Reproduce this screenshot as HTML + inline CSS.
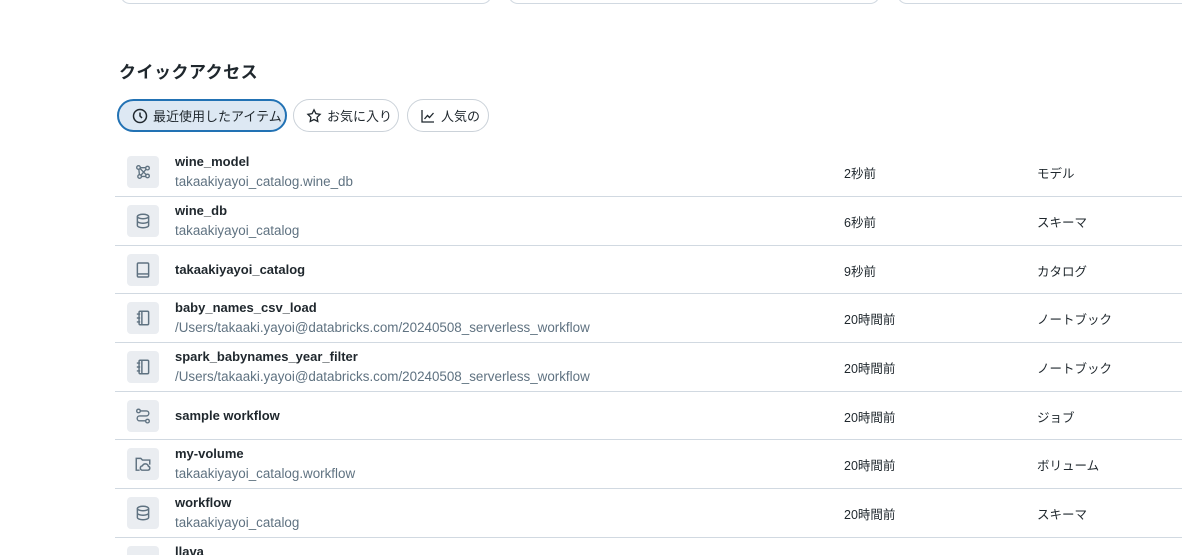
<!DOCTYPE html>
<html style="width:1182px;height:555px;overflow:hidden"><head><meta charset="utf-8"><style>
*{box-sizing:border-box;margin:0;padding:0}
body{width:1182px;height:555px;overflow:hidden;background:#fff;font-family:"Liberation Sans","Noto Sans CJK JP",sans-serif;color:#1f272d;position:relative}
.card{position:absolute;top:-20px;height:24px;border:1px solid #d1d9e1;border-radius:0 0 10px 10px;border-top:none}
h2{position:absolute;left:119px;top:58px;font-size:17px;font-weight:bold;letter-spacing:0.5px}
.pill{position:absolute;top:99px;height:33px;border:1px solid #cbd2d9;border-radius:17px;font-size:13px;display:flex;align-items:center;gap:5px;padding-left:12px}
.pill.active{background:#dde8f3;border:2px solid #2272b4}
.row{position:absolute;left:115px;width:1067px;border-bottom:1px solid #d1d9e1}
.ic{position:absolute;left:12px;width:32px;height:32px;background:#eaedf1;border-radius:4px;display:flex;align-items:center;justify-content:center}
.ic svg{width:18px;height:18px}
.t{position:absolute;left:60px;font-size:13px;font-weight:bold}
.s{position:absolute;left:60px;font-size:13.4px;color:#5f7281}
.d{position:absolute;left:729px;font-size:12.5px}
.k{position:absolute;left:922px;font-size:12.5px}
</style></head><body>
<div class="card" style="left:120px;width:372px"></div>
<div class="card" style="left:508px;width:372px"></div>
<div class="card" style="left:897px;width:300px"></div>
<h2>クイックアクセス</h2>
<div class="pill active" style="left:117px;width:170px;padding-left:13px"><svg width="16" height="16" viewBox="0 0 16 16" fill="none" stroke="#1f272d" stroke-width="1.5"><circle cx="8" cy="8" r="6.5"/><path d="M8 4.5V8l2 2"/></svg>最近使用したアイテム</div>
<div class="pill" style="left:293px;width:106px"><svg width="16" height="16" viewBox="0 0 16 16" fill="none" stroke="#1f272d" stroke-width="1.3"><path d="M8 1.8l1.9 3.9 4.2.6-3 3 .7 4.2L8 11.5l-3.8 2 .7-4.2-3-3 4.2-.6z"/></svg>お気に入り</div>
<div class="pill" style="left:407px;width:82px"><svg width="16" height="16" viewBox="0 0 16 16" fill="none" stroke="#1f272d" stroke-width="1.3"><path d="M2 2v12h12M4.5 11l3-3.5 2 2 4-4.5"/></svg>人気の</div>

<div class="row" style="top:148px;height:49px"><div class="ic" style="top:8px"><svg viewBox="0 0 16 16" fill="none" stroke="#5f7281" stroke-width="1.2"><circle cx="4" cy="4" r="1.6"/><circle cx="12" cy="4.5" r="1.6"/><circle cx="5" cy="12" r="1.6"/><circle cx="12" cy="11.5" r="1.6"/><path d="M5.5 4.2h5M4.3 5.6l.5 4.8M10.8 5.5L6.2 10.8M5.5 5l5.3 5.4M6.6 11.9h3.8"/></svg></div><div class="t" style="top:6px">wine_model</div><div class="s" style="top:26px">takaakiyayoi_catalog.wine_db</div><div class="d" style="top:15px">2秒前</div><div class="k" style="top:15px">モデル</div></div>
<div class="row" style="top:197px;height:49px"><div class="ic" style="top:8px"><svg viewBox="0 0 16 16" fill="none" stroke="#5f7281" stroke-width="1.3"><ellipse cx="8" cy="4" rx="5" ry="2"/><path d="M3 4v8c0 1.1 2.2 2 5 2s5-.9 5-2V4M3 8c0 1.1 2.2 2 5 2s5-.9 5-2"/></svg></div><div class="t" style="top:6px">wine_db</div><div class="s" style="top:26px">takaakiyayoi_catalog</div><div class="d" style="top:15px">6秒前</div><div class="k" style="top:15px">スキーマ</div></div>
<div class="row" style="top:246px;height:48px"><div class="ic" style="top:8px"><svg viewBox="0 0 16 16" fill="none" stroke="#5f7281" stroke-width="1.3"><rect x="3" y="1.8" width="10" height="12.4" rx="1"/><path d="M3 11.5h10"/></svg></div><div class="t" style="top:16px">takaakiyayoi_catalog</div><div class="d" style="top:15px">9秒前</div><div class="k" style="top:15px">カタログ</div></div>
<div class="row" style="top:294px;height:49px"><div class="ic" style="top:8px"><svg viewBox="0 0 16 16" fill="none" stroke="#5f7281" stroke-width="1.3"><rect x="4.5" y="2" width="8.5" height="12" rx="1"/><path d="M7 2v12M2.5 4.5h3M2.5 8h3M2.5 11.5h3"/></svg></div><div class="t" style="top:6px">baby_names_csv_load</div><div class="s" style="top:26px">/Users/takaaki.yayoi@databricks.com/20240508_serverless_workflow</div><div class="d" style="top:15px">20時間前</div><div class="k" style="top:15px">ノートブック</div></div>
<div class="row" style="top:343px;height:49px"><div class="ic" style="top:8px"><svg viewBox="0 0 16 16" fill="none" stroke="#5f7281" stroke-width="1.3"><rect x="4.5" y="2" width="8.5" height="12" rx="1"/><path d="M7 2v12M2.5 4.5h3M2.5 8h3M2.5 11.5h3"/></svg></div><div class="t" style="top:6px">spark_babynames_year_filter</div><div class="s" style="top:26px">/Users/takaaki.yayoi@databricks.com/20240508_serverless_workflow</div><div class="d" style="top:15px">20時間前</div><div class="k" style="top:15px">ノートブック</div></div>
<div class="row" style="top:392px;height:48px"><div class="ic" style="top:8px"><svg viewBox="0 0 16 16" fill="none" stroke="#5f7281" stroke-width="1.2"><circle cx="4" cy="3.5" r="1.6"/><circle cx="12" cy="12.5" r="1.6"/><path d="M5.6 3.5H11a2.2 2.2 0 010 4.4H5a2.2 2.2 0 000 4.4h5.4"/></svg></div><div class="t" style="top:16px">sample workflow</div><div class="d" style="top:15px">20時間前</div><div class="k" style="top:15px">ジョブ</div></div>
<div class="row" style="top:440px;height:49px"><div class="ic" style="top:8px"><svg viewBox="0 0 16 16" fill="none" stroke="#5f7281" stroke-width="1.3"><path d="M5 13.5H2V3h4l1.5 1.5H14v4"/><path d="M7 13.5a2 2 0 01.5-3.9 2.8 2.8 0 015.3.4 1.8 1.8 0 01-.3 3.5z"/></svg></div><div class="t" style="top:6px">my-volume</div><div class="s" style="top:26px">takaakiyayoi_catalog.workflow</div><div class="d" style="top:15px">20時間前</div><div class="k" style="top:15px">ボリューム</div></div>
<div class="row" style="top:489px;height:49px"><div class="ic" style="top:8px"><svg viewBox="0 0 16 16" fill="none" stroke="#5f7281" stroke-width="1.3"><ellipse cx="8" cy="4" rx="5" ry="2"/><path d="M3 4v8c0 1.1 2.2 2 5 2s5-.9 5-2V4M3 8c0 1.1 2.2 2 5 2s5-.9 5-2"/></svg></div><div class="t" style="top:6px">workflow</div><div class="s" style="top:26px">takaakiyayoi_catalog</div><div class="d" style="top:15px">20時間前</div><div class="k" style="top:15px">スキーマ</div></div>
<div class="row" style="top:538px;height:17px;border:none;overflow:hidden"><div class="ic" style="top:8px"></div><div class="t" style="top:6px">llava</div></div>
</body></html>
